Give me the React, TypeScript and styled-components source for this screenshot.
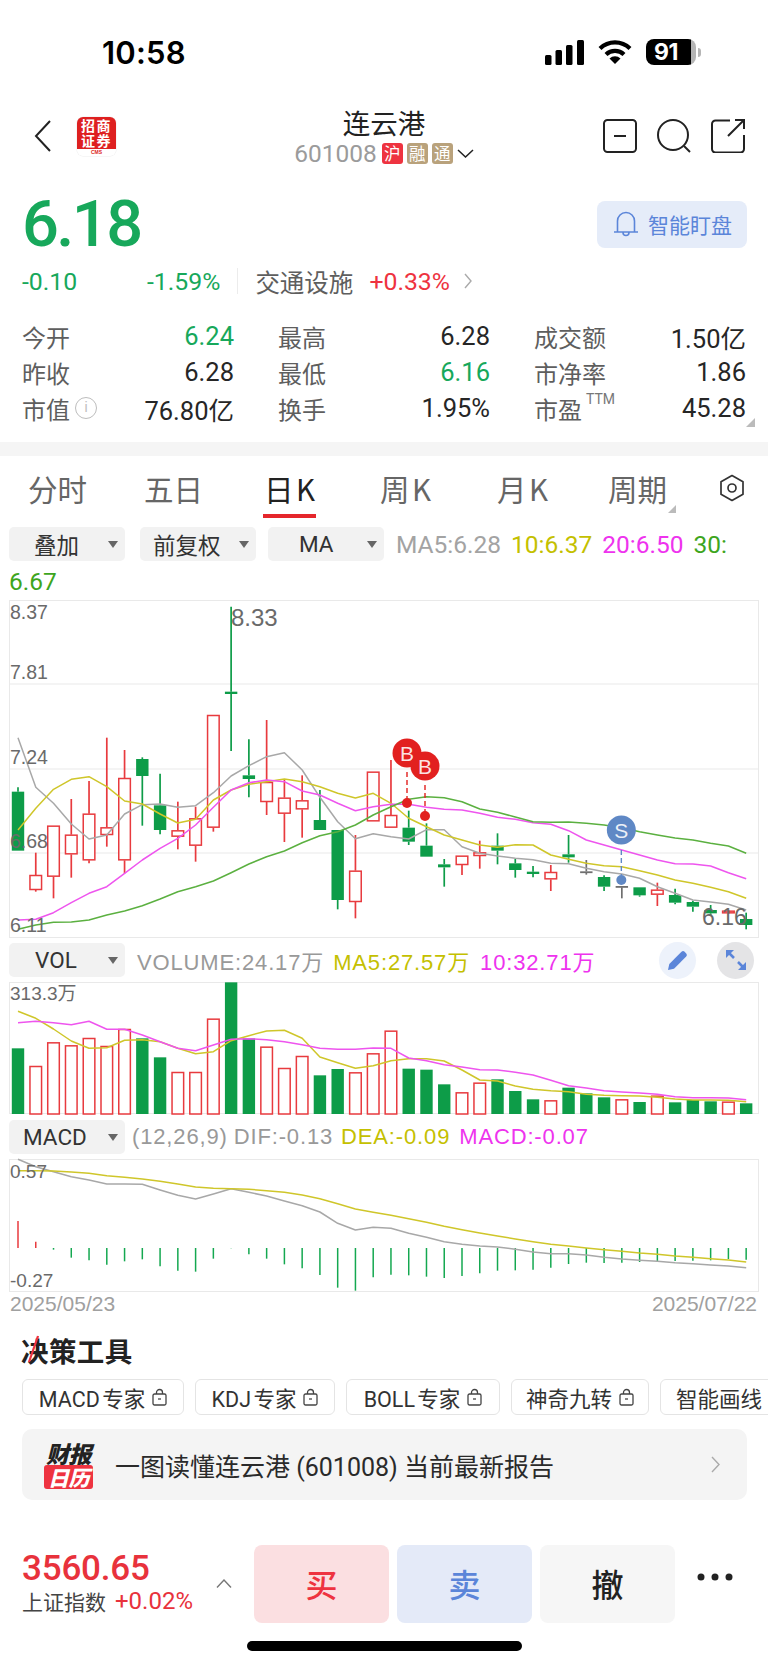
import React from 'react';
import styled, { createGlobalStyle } from 'styled-components';

const Global = createGlobalStyle`
  html, body { margin: 0; padding: 0; background: #fff; }
  #root { width: 768px; height: 1665px; overflow: hidden; }
  * { box-sizing: border-box; }
`;
const CN = `"Noto Sans CJK SC", sans-serif`;
const NUM = `Roboto, "Noto Sans CJK SC", sans-serif`;
const UI = `"Liberation Sans", "Noto Sans CJK SC", sans-serif`;
const GREEN = '#17a85b';
const RED = '#ee3340';
const BLUE = '#5b85d9';

const Page = styled.div`
  width: 768px; height: 1665px; overflow: hidden; background: #fff; font-family: ${NUM}; color: #222;
`;
const StatusBar = styled.div`
  height: 104px; display: flex; align-items: center; justify-content: space-between; padding: 0 67px 0 102px;
`;
const Time = styled.div`font: 600 31px Inter, sans-serif; color: #000; letter-spacing: 0.2px;`;
const StatusIcons = styled.div`display: flex; align-items: center; gap: 14px;`;
const Battery = styled.div`display: flex; align-items: center;`;
const BatteryBody = styled.div`
  width: 50px; height: 26px; border-radius: 8px; background: linear-gradient(90deg, #000 90%, #b5b5b5 90%);
  color: #fff; font: 700 23px Inter, sans-serif; display: flex; align-items: center; padding-left: 8px; letter-spacing: -0.5px;
`;
const BatteryCap = styled.div`width: 3px; height: 9px; margin-left: 2px; border-radius: 0 3px 3px 0; background: #b5b5b5;`;

const NavBar = styled.div`
  height: 64px; display: grid; grid-template-columns: 1fr auto 1fr; align-items: center; padding: 0 23px;
`;
const NavLeft = styled.div`display: flex; align-items: center; gap: 26px; padding-left: 11px;`;
const Logo = styled.div`
  width: 39px; height: 39px; border-radius: 6px; overflow: hidden; background: #fff; display: flex; flex-direction: column; box-shadow: 0 0 0 0.5px #eee;
`;
const LogoRed = styled.div`
  height: 32px; background: #de2020; color: #fff; font: 700 14px/14.5px ${CN}; text-align: center; padding-top: 1.500px; letter-spacing: 1.4px; white-space: pre;
`;
const LogoFoot = styled.div`flex: 1; font: 700 5px/7px ${UI}; color: #d22; text-align: center;`;
const NavCenter = styled.div`display: flex; flex-direction: column; align-items: center;`;
const Title = styled.div`font: 400 27.5px/28px ${CN}; color: #222; margin-bottom: 7px;`;
const CodeRow = styled.div`display: flex; align-items: center; height: 22px;`;
const Code = styled.span`font: 400 24.5px/22px ${NUM}; color: #9b9b9b; margin-right: 5px;`;
const Tag = styled.span<{ $bg: string }>`
  width: 21px; height: 21px; border-radius: 3px; background: ${p => p.$bg}; color: #fff; font: 400 16.5px/21px ${CN}; text-align: center; margin-right: 4px;
`;
const NavRight = styled.div`display: flex; justify-content: flex-end; gap: 20px;`;

const PriceRow = styled.div`
  margin-top: 32px; height: 48px; display: flex; justify-content: space-between; align-items: center; padding: 0 21px 0 22px;
`;
const Price = styled.div`font: 500 65px/47px ${NUM}; color: ${GREEN}; letter-spacing: -2.6px;`;
const WatchBtn = styled.div`
  width: 150px; height: 47px; border-radius: 8px; background: #e5ecf9; color: ${BLUE}; display: flex; align-items: center; gap: 9px; padding-left: 16px; font: 400 21px ${CN};
`;
const ChangeRow = styled.div`height: 66px; display: flex; align-items: center; font-size: 24.8px; padding-left: 22px;`;
const Chg = styled.span<{ $w?: number; $c: string }>`color: ${p => p.$c}; width: ${p => (p.$w ? p.$w + 'px' : 'auto')};`;
const Sep = styled.span`width: 1px; height: 26px; background: #ececec; margin: 0 17px;`;
const Sector = styled.span`font: 400 24.5px ${CN}; color: #5e5e5e; margin-right: 16px;`;
const ChangeArrow = styled.svg`margin-left: 14px;`;

const Stats = styled.div`
  margin-top: 4px; position: relative; display: grid; grid-template-columns: repeat(3, 212px); column-gap: 44px; grid-auto-rows: 36px; padding-left: 22px;
`;
const Cell = styled.div`display: flex; justify-content: space-between; align-items: center;`;
const Label = styled.span`font: 400 24px ${CN}; color: #5e5e5e; display: flex; align-items: center;`;
const Value = styled.span<{ $c?: string }>`font: 400 25.5px ${NUM}; color: ${p => p.$c || '#262626'};`;
const InfoDot = styled.span`
  width: 22px; height: 22px; border-radius: 50%; border: 1.5px solid #bdbdbd; color: #bdbdbd; font: 400 14px/19px ${UI}; text-align: center; margin-left: 5px;
`;
const Sup = styled.span`font: 400 14px ${NUM}; color: #777; margin: -18px 0 0 4px;`;
const Corner = styled.div`
  position: absolute; right: 13px; bottom: -1px; width: 0; height: 0; border-left: 9px solid transparent; border-bottom: 9px solid #bbb;
`;
const Band = styled.div`margin-top: 16px; height: 14px; background: #f5f5f5;`;

const Tabs = styled.div`
  height: 64px; display: grid; grid-template-columns: 116px 120px 116px 117px 111px 111px auto; align-items: center; padding-left: 28px;
`;
const Tab = styled.div<{ $on?: boolean; $mark?: boolean }>`
  position: relative; height: 64px; display: flex; align-items: center; font: 400 29.5px ${CN}; color: ${p => (p.$on ? '#222' : '#666')}; word-spacing: -4px;
  ${p => p.$on && `&::after { content: ''; position: absolute; left: -1px; width: 53px; bottom: 2px; height: 4px; background: #e5262b; }`}
  ${p => p.$mark && `&::after { content: ''; position: absolute; left: 60px; bottom: 7px; width: 0; height: 0; border-left: 8px solid transparent; border-bottom: 8px solid #bbb; }`}
`;

const IndicatorRow = styled.div`
  margin-top: 7px; height: 34px; display: flex; align-items: center; padding-left: 9px;
`;
const Chip = styled.div<{ $pad: number; $mr?: number }>`
  flex: none; width: 116px; height: 34px; border-radius: 5px; background: #f2f2f2; display: flex; align-items: center; padding-left: ${p => p.$pad}px; padding-right: 7px;
  margin-right: ${p => p.$mr ?? 12}px; font: 400 22.5px ${NUM}; color: #333;
  &::after { content: ''; margin-left: auto; width: 0; height: 0; border-left: 5px solid transparent; border-right: 5px solid transparent; border-top: 7px solid #666; }
`;
const Legend = styled.span<{ $c: string; $mr?: number }>`
  font: 400 24.5px ${NUM}; color: ${p => p.$c}; margin-right: ${p => p.$mr ?? 0}px; white-space: nowrap;
`;
const WrapLine = styled.div`height: 39px; display: flex; align-items: center; padding: 1px 0 0 9px;`;
const ChartBox = styled.div<{ $h: number; $mt?: number }>`
  margin: ${p => p.$mt ?? 0}px 0 0 9px; width: 750px; height: ${p => p.$h}px; border: 1px solid #e9e9e9; background: #fff;
`;
const Plot = styled.svg`display: block; margin: -1px; overflow: visible;`;
const SubRow = styled.div<{ $mt: number }>`
  margin-top: ${p => p.$mt}px; height: 34px; display: flex; align-items: center; padding: 0 14px 0 9px;
`;
const SubLegend = styled.span<{ $c: string; $ml?: number }>`
  font: 400 22px ${UI}; letter-spacing: 0.85px; color: ${p => p.$c}; margin-left: ${p => p.$ml ?? 0}px; white-space: nowrap;
`;
const RoundBtn = styled.div<{ $bg: string; $ml: string }>`
  flex: none; width: 37px; height: 37px; border-radius: 50%; background: ${p => p.$bg}; display: flex; align-items: center; justify-content: center; margin-left: ${p => p.$ml};
`;
const DateRow = styled.div`
  height: 24px; padding: 0 11px 0 10px; display: flex; justify-content: space-between; align-items: center; font: 400 21px ${UI}; color: #a0a0a0;
`;
const SectionTitle = styled.div`
  position: relative; margin: 19px 0 0 21px; width: 114px; height: 30px; font: 700 27.5px/30px ${CN}; color: #222; letter-spacing: 0.4px;
`;
const Slash = styled.svg`position: absolute; left: 6px; top: 0;`;
const ToolRow = styled.div`margin-top: 14px; display: flex; gap: 11px; padding-left: 22px; overflow: hidden;`;
const ToolChip = styled.div<{ $w: number }>`
  flex: none; width: ${p => p.$w}px; height: 36px; border: 1.5px solid #e4e4e4; border-radius: 6px; display: flex; align-items: center; justify-content: center; gap: 7px;
  font: 400 21.5px ${NUM}; word-spacing: -3px; color: #333; white-space: nowrap;
`;
const Report = styled.div`
  margin: 14px 0 0 22px; width: 725px; height: 71px; border-radius: 10px; background: #f4f4f4; display: flex; align-items: center; padding: 0 27px 0 22px;
`;
const ReportLogo = styled.div`width: 49px; display: flex; flex-direction: column; align-items: center; margin-right: 22px;`;
const ReportTop = styled.div`font: italic 900 23px/24px ${CN}; color: #222; letter-spacing: -0.5px;`;
const ReportBottom = styled.div`
  width: 49px; height: 24px; border-radius: 3px; background: #ee3340; color: #fff; font: italic 900 21px/24px ${CN}; text-align: center; letter-spacing: -0.5px;
`;
const ReportText = styled.div`font: 400 25px ${NUM}; color: #2a2a2a; flex: 1; white-space: nowrap;`;
const Footer = styled.div`margin-top: 45px; height: 78px; display: flex; align-items: flex-start; padding-left: 22px;`;
const IndexBox = styled.div`width: 191px; padding-top: 5px;`;
const IndexValue = styled.div`font: 500 35px/38px ${NUM}; color: #e8323c; letter-spacing: -0.2px;`;
const IndexSub = styled.div`display: flex; align-items: center; gap: 9px; font: 400 21px/26px ${CN}; color: #444;`;
const IndexPct = styled.span`font: 400 24px/26px ${NUM}; color: #e8323c;`;
const Caret = styled.svg`margin: 34px 22px 0 3px; flex: none;`;
const TradeBtn = styled.div<{ $bg: string; $c: string }>`
  flex: none; width: 135px; height: 78px; border-radius: 8px; margin-right: 8px; background: ${p => p.$bg}; color: ${p => p.$c}; font: 500 32px/76px ${CN}; text-align: center;
`;
const MoreDots = styled.svg`margin: 28px 0 0 14px; flex: none;`;
const HomeBar = styled.div`margin: 18px 0 0 247px; width: 275px; height: 10px; border-radius: 5px; background: #000;`;

const C_RED = '#e83a3e';
const C_GREEN = '#0d9c48';
const C_GRAY = '#6f6f6f';
const X = (i: number) => 9 + 17.76 * i;
type K = [string, number, number, number, number];
const kdata: K[] = [
  ['g',562,575,752,752],['r',758,825,870,875],['r',677,677,830,895],['r',597,704,763,833],['r',543,641,781,790],['r',413,682,705,740],['r',450,534,781,820],
  ['g',472,477,528,677],['g',521,616,690,703],['r',605,691,710,748],['r',620,655,737,785],['r',345,345,683,695],['g',20,275,282,453],['g',418,526,537,592],
  ['r',360,546,606,645],['r',540,593,641,726],['r',526,601,628,713],['g',570,660,690,690],['g',690,690,900,928],['r',705,812,906,955],['r',515,515,664,664],
  ['r',480,645,683,683],['g',632,683,725,735],['g',670,737,770,770],['g',777,793,802,860],['r',767,767,795,825],['r',722,757,768,806],['g',700,737,752,793],
  ['g',777,790,810,833],['g',798,815,822,832],['r',795,816,838,873],['g',705,763,772,788],['k',780,814,818,824],['g',826,831,860,873],['k',858,858,862,895],
  ['g',862,862,886,890],['r',848,869,884,918],['g',866,885,908,913],['g',902,906,920,935],['g',915,930,940,945],['r',930,932,940,942],['g',938,957,975,988],
];
const ma5 = [413,562,610,672,717,705,642,614,612,622,617,578,528,497,470,458,510,592,665,716,701,710,717,689,689,740,760,768,775,779,790,791,805,815,822,835,860,880,900,906,913,930];
const ma10 = [690,625,568,538,530,560,603,612,642,669,658,600,570,553,545,537,545,560,580,594,580,610,655,680,705,720,735,742,734,735,765,778,790,797,800,812,825,840,850,862,875,895];
const ma20 = [960,958,938,908,880,860,820,780,745,715,675,622,570,548,540,545,573,585,610,632,620,613,613,622,628,630,640,652,658,668,673,692,720,735,750,765,780,791,792,798,818,836];
const ma30 = [988,975,967,966,960,945,933,917,897,875,860,843,818,792,770,753,728,707,695,675,645,620,598,590,593,605,627,637,651,665,667,666,670,675,683,695,705,714,720,730,738,760];
const vols: [string, number][] = [['g',355],['r',408],['r',337],['r',346],['r',324],['r',348],['r',297],['g',325],['g',382],['r',426],['r',426],['r',266],['g',157],['g',325],['r',350],['r',414],['r',378],['g',436],['g',417],['r',427],['r',370],['r',302],['g',416],['g',419],['g',463],['r',487],['r',458],['g',448],['g',483],['g',508],['r',511],['g',473],['g',490],['g',502],['r',508],['g',516],['r',497],['g',517],['g',510],['g',514],['r',515],['g',520]];
const vy = [244,265,297,333,355,353,331,329,335,355,371,365,332,317,303,301,325,381,398,415,407,392,386,386,393,420,450,453,468,478,482,485,493,496,497,498,502,507,510,510,511,515];
const vm = [278,274,278,284,274,298,298,315,335,355,362,345,328,326,329,335,344,355,358,358,354,355,384,392,404,411,419,420,427,435,451,467,474,482,486,489,493,500,503,503,504,509];
const hist = [303,365,389,413,421,434,424,418,439,452,455,416,385,403,416,433,445,465,503,512,472,464,466,470,474,468,460,452,451,449,443,432,428,429,428,426,424,423,422,421,417,419];
const dif = [118,140,155,170,180,192,192,193,210,226,237,222,206,217,228,243,257,276,310,330,322,325,340,352,365,373,378,381,388,396,401,401,405,412,417,421,424,428,431,435,438,443];
const dea = [152,152,153,156,160,167,172,177,184,192,201,205,206,208,212,217,225,236,251,267,277,286,296,307,319,329,339,348,357,365,373,378,384,389,394,399,403,408,412,416,420,426];

const line = (arr: number[], off: number) => arr.map((v, i) => `${X(i).toFixed(1)},${(v / 3 - off).toFixed(1)}`).join(' ');
const MaLine = ({ d, off, c }: { d: number[]; off: number; c: string }) => (
  <polyline points={line(d, off)} fill="none" stroke={c} strokeWidth={1.5} strokeLinejoin="round" />
);
const axisText = { fill: '#6a6a6a', fontFamily: '"Liberation Sans", "Noto Sans CJK SC", sans-serif' };

const Candles = () => (
  <>
    {kdata.map(([t, hi, a, b, lo], i) => {
      const x = X(i);
      const c = t === 'r' ? C_RED : t === 'g' ? C_GREEN : C_GRAY;
      const top = a / 3, bot = b / 3;
      return (
        <g key={i}>
          <line x1={x} x2={x} y1={hi / 3} y2={top} stroke={c} strokeWidth={1.7} />
          <line x1={x} x2={x} y1={bot} y2={lo / 3} stroke={c} strokeWidth={1.7} />
          {t === 'r'
            ? <rect x={x - 5.8} y={top + 0.5} width={11.6} height={Math.max(bot - top - 1, 1)} fill="#fff" stroke={c} strokeWidth={1.5} />
            : <rect x={x - 6.2} y={top} width={12.4} height={Math.max(bot - top, 1.8)} fill={c} />}
        </g>
      );
    })}
  </>
);

const Marker = ({ x, y, r, c, t }: { x: number; y: number; r: number; c: string; t: string }) => (
  <g>
    <circle cx={x} cy={y} r={r} fill={c} />
    <text x={x} y={y + 7.5} textAnchor="middle" fontSize={21} fill="#fff" fillOpacity={0.88} fontFamily="Liberation Sans, sans-serif">{t}</text>
  </g>
);

const zx = (z: number) => 384 + z / 3 - 9;

const MainChart = () => (
  <ChartBox $h={338}>
    <Plot width={750} height={338} viewBox="0 0 750 338">
      {[84, 169, 253].map(y => <line key={y} x1={0} x2={750} y1={y} y2={y} stroke="#e9e9e9" strokeWidth={1} />)}
      <Candles />
      <MaLine d={ma5} off={0} c="#a8a8a8" />
      <MaLine d={ma10} off={0} c="#cfc62a" />
      <MaLine d={ma20} off={0} c="#ee55ee" />
      <MaLine d={ma30} off={0} c="#5bb040" />
      <g style={axisText} fontSize={19.5}>
        <text x={1} y={19}>8.37</text>
        <text x={1} y={79}>7.81</text>
        <text x={1} y={164}>7.24</text>
        <text x={1} y={248}>6.68</text>
        <text x={1} y={332}>6.11</text>
        <text x={222} y={26} fontSize={24}>8.33</text>
        <text x={693} y={325} fontSize={23}>6.16</text>
      </g>
      <line x1={zx(69)} x2={zx(69)} y1={172} y2={200} stroke="#e2201f" strokeWidth={1.4} strokeDasharray="5 3" />
      <line x1={zx(123)} x2={zx(123)} y1={185} y2={212} stroke="#e2201f" strokeWidth={1.4} strokeDasharray="5 3" />
      <line x1={zx(712)} x2={zx(712)} y1={250} y2={275} stroke="#5f88c5" strokeWidth={1.4} strokeDasharray="5 3" />
      <circle cx={zx(69)} cy={203} r={5} fill="#e2201f" />
      <circle cx={zx(123)} cy={216} r={5} fill="#e2201f" />
      <circle cx={zx(712)} cy={280} r={5} fill="#5f88c5" />
      <Marker x={zx(69)} y={153} r={14.5} c="#e2201f" t="B" />
      <Marker x={zx(123)} y={166} r={14.5} c="#e2201f" t="B" />
      <Marker x={zx(712)} y={230} r={14.5} c="#5f88c5" t="S" />
    </Plot>
  </ChartBox>
);

const VolChart = () => {
  const base = 552 / 3 - 52;
  return (
    <ChartBox $h={132} $mt={5}>
      <Plot width={750} height={132} viewBox="0 0 750 132">
        {vols.map(([t, z], i) => {
          const y = z / 3 - 52;
          return t === 'r'
            ? <rect key={i} x={X(i) - 5.8} y={y + 0.5} width={11.6} height={base - y - 0.5} fill="#fff" stroke={C_RED} strokeWidth={1.5} />
            : <rect key={i} x={X(i) - 6.2} y={y} width={12.4} height={base - y} fill={C_GREEN} />;
        })}
        <MaLine d={vy} off={52} c="#cfc62a" />
        <MaLine d={vm} off={52} c="#ee55ee" />
        <text x={1} y={18} fontSize={19} style={axisText}>313.3万</text>
      </Plot>
    </ChartBox>
  );
};

const MacdChart = () => {
  const base = 384 / 3 - 39;
  return (
    <ChartBox $h={133} $mt={5}>
      <Plot width={750} height={133} viewBox="0 0 750 133">
        {hist.map((z, i) => (
          <line key={i} x1={X(i)} x2={X(i)} y1={base} y2={z / 3 - 39} stroke={i < 2 ? C_RED : '#14a850'} strokeWidth={1.5} />
        ))}
        <MaLine d={dif} off={39} c="#a8a8a8" />
        <MaLine d={dea} off={39} c="#cfc62a" />
        <text x={1} y={19} fontSize={19} style={axisText}>0.57</text>
        <text x={1} y={128} fontSize={19} style={axisText}>-0.27</text>
      </Plot>
    </ChartBox>
  );
};

const Lock = () => (
  <svg width="15" height="18" viewBox="0 0 15 18" fill="none" stroke="#444" strokeWidth="1.3">
    <rect x="1" y="6" width="13" height="11" rx="1.5" />
    <path d="M4.5 6V4.5a3 3 0 0 1 6 0V6" />
    <path d="M6 11h3" />
  </svg>
);

export default function App() {
  return (
    <Page>
      <Global />
      <StatusBar>
        <Time>10:58</Time>
        <StatusIcons>
          <svg width="39" height="25" viewBox="0 0 39 25" fill="#000">
            <rect x="0" y="15" width="6.5" height="10" rx="1.5" />
            <rect x="10.5" y="10" width="6.5" height="15" rx="1.5" />
            <rect x="21" y="5" width="6.5" height="20" rx="1.5" />
            <rect x="32" y="0" width="7" height="25" rx="1.5" />
          </svg>
          <svg width="34" height="24" viewBox="0 0 34 24" fill="none" stroke="#000" strokeWidth="4.2">
            <path d="M2 8.5a21.5 21.5 0 0 1 30 0" />
            <path d="M8 14.5a13 13 0 0 1 18 0" />
            <path d="M17 24l-5.5-5.6a7.8 7.8 0 0 1 11 0z" fill="#000" stroke="none" />
          </svg>
          <Battery><BatteryBody>91</BatteryBody><BatteryCap /></Battery>
        </StatusIcons>
      </StatusBar>

      <NavBar>
        <NavLeft>
          <svg width="17" height="32" viewBox="0 0 17 32" fill="none" stroke="#222" strokeWidth="2"><path d="M16 1L2 16l14 15" /></svg>
          <Logo>
            <LogoRed>{'招商\n证券'}</LogoRed>
            <LogoFoot>CMS</LogoFoot>
          </Logo>
        </NavLeft>
        <NavCenter>
          <Title>连云港</Title>
          <CodeRow>
            <Code>601008</Code>
            <Tag $bg="#ee3340">沪</Tag>
            <Tag $bg="#b9a27c">融</Tag>
            <Tag $bg="#b9a27c">通</Tag>
            <svg width="17" height="9" viewBox="0 0 17 9" fill="none" stroke="#222" strokeWidth="1.5"><path d="M1 1l7.5 7L16 1" /></svg>
          </CodeRow>
        </NavCenter>
        <NavRight>
          <svg width="34" height="34" viewBox="0 0 34 34" fill="none" stroke="#222" strokeWidth="2">
            <rect x="1" y="1" width="32" height="32" rx="3.5" /><path d="M11 17h12" />
          </svg>
          <svg width="34" height="34" viewBox="0 0 34 34" fill="none" stroke="#222" strokeWidth="2">
            <circle cx="16" cy="16" r="15" /><path d="M27 27l6 6" />
          </svg>
          <svg width="34" height="34" viewBox="0 0 34 34" fill="none" stroke="#222" strokeWidth="2">
            <path d="M19 1.5H4.5a3.5 3.5 0 0 0-3.5 3.5v25a3.5 3.5 0 0 0 3.5 3.5h25a3.5 3.5 0 0 0 3.5-3.5V16" />
            <path d="M17 17L33 1M24 1h9v9" />
          </svg>
        </NavRight>
      </NavBar>

      <PriceRow>
        <Price>6.18</Price>
        <WatchBtn>
          <svg width="26" height="26" viewBox="0 0 26 26" fill="none" stroke={BLUE} strokeWidth="1.6">
            <path d="M1 21h24M4.5 21V10a8.500 8.500 0 0 1 17 0v11M10 21.500a3 3 0 0 0 6 0" />
          </svg>
          智能盯盘
        </WatchBtn>
      </PriceRow>

      <ChangeRow>
        <Chg $w={125} $c={GREEN}>-0.10</Chg>
        <Chg $c={GREEN}>-1.59%</Chg>
        <Sep />
        <Sector>交通设施</Sector>
        <Chg $c={RED}>+0.33%</Chg>
        <ChangeArrow width="8" height="16" viewBox="0 0 8 16" fill="none" stroke="#aaa" strokeWidth="1.4"><path d="M1 1l6 7-6 7" /></ChangeArrow>
      </ChangeRow>

      <Stats>
        <Cell><Label>今开</Label><Value $c={GREEN}>6.24</Value></Cell>
        <Cell><Label>最高</Label><Value>6.28</Value></Cell>
        <Cell><Label>成交额</Label><Value>1.50亿</Value></Cell>
        <Cell><Label>昨收</Label><Value>6.28</Value></Cell>
        <Cell><Label>最低</Label><Value $c={GREEN}>6.16</Value></Cell>
        <Cell><Label>市净率</Label><Value>1.86</Value></Cell>
        <Cell><Label>市值<InfoDot>i</InfoDot></Label><Value>76.80亿</Value></Cell>
        <Cell><Label>换手</Label><Value>1.95%</Value></Cell>
        <Cell><Label>市盈<Sup>TTM</Sup></Label><Value>45.28</Value></Cell>
        <Corner />
      </Stats>
      <Band />

      <Tabs>
        <Tab>分时</Tab>
        <Tab>五日</Tab>
        <Tab $on>日 K</Tab>
        <Tab>周 K</Tab>
        <Tab>月 K</Tab>
        <Tab $mark>周期</Tab>
        <svg width="26" height="28" viewBox="0 0 26 28" fill="none" stroke="#333" strokeWidth="1.7">
          <path d="M13 1.500l11 6.300v12.400l-11 6.300-11-6.300V7.800z" strokeLinejoin="round" /><circle cx="13" cy="14" r="4" />
        </svg>
      </Tabs>

      <IndicatorRow>
        <Chip $pad={25} $mr={15}>叠加</Chip>
        <Chip $pad={13}>前复权</Chip>
        <Chip $pad={31}>MA</Chip>
        <Legend $c="#a3a3a3" $mr={10}>MA5:6.28</Legend>
        <Legend $c="#c4c000" $mr={10}>10:6.37</Legend>
        <Legend $c="#ee33ee" $mr={10}>20:6.50</Legend>
        <Legend $c="#3da51d">30:</Legend>
      </IndicatorRow>
      <WrapLine><Legend $c="#3da51d">6.67</Legend></WrapLine>

      <MainChart />

      <SubRow $mt={5}>
        <Chip $pad={26} $mr={12}>VOL</Chip>
        <SubLegend $c="#999">VOLUME:24.17万</SubLegend>
        <SubLegend $c="#c4c000" $ml={9}>MA5:27.57万</SubLegend>
        <SubLegend $c="#ee33ee" $ml={10}>10:32.71万</SubLegend>
        <RoundBtn $bg="#edf2fb" $ml="auto">
          <svg width="22" height="22" viewBox="0 0 22 22" fill={BLUE}><path d="M1 21l1.300-6L14.500 2.800a2.200 2.200 0 0 1 3.100 0l1.600 1.600a2.200 2.200 0 0 1 0 3.100L7 19.700z" /></svg>
        </RoundBtn>
        <RoundBtn $bg="#e4e4e6" $ml="21px">
          <svg width="24" height="24" viewBox="0 0 24 24" fill={BLUE}>
            <path d="M2 2h8l-8 8zM22 22h-8l8-8z" />
            <path d="M5 5l5 5M14 14l5 5" stroke={BLUE} strokeWidth="2.600" fill="none" />
          </svg>
        </RoundBtn>
      </SubRow>
      <VolChart />

      <SubRow $mt={6}>
        <Chip $pad={14} $mr={7}>MACD</Chip>
        <SubLegend $c="#999">(12,26,9)</SubLegend>
        <SubLegend $c="#999" $ml={6}>DIF:-0.13</SubLegend>
        <SubLegend $c="#c4c000" $ml={8}>DEA:-0.09</SubLegend>
        <SubLegend $c="#ee33ee" $ml={9}>MACD:-0.07</SubLegend>
      </SubRow>
      <MacdChart />
      <DateRow><span>2025/05/23</span><span>2025/07/22</span></DateRow>

      <SectionTitle>
        决策工具
        <Slash width="12" height="28" viewBox="0 0 12 28" fill="none" stroke="#ee3340" strokeWidth="2.200"><path d="M11 1L2 27" /></Slash>
      </SectionTitle>
      <ToolRow>
        <ToolChip $w={162}>MACD 专家<Lock /></ToolChip>
        <ToolChip $w={140}>KDJ 专家<Lock /></ToolChip>
        <ToolChip $w={154}>BOLL 专家<Lock /></ToolChip>
        <ToolChip $w={138}>神奇九转<Lock /></ToolChip>
        <ToolChip $w={140}>智能画线<Lock /></ToolChip>
      </ToolRow>
      <Report>
        <ReportLogo>
          <ReportTop>财报</ReportTop>
          <ReportBottom>日历</ReportBottom>
        </ReportLogo>
        <ReportText>一图读懂连云港 (601008) 当前最新报告</ReportText>
        <svg width="9" height="17" viewBox="0 0 9 17" fill="none" stroke="#aaa" strokeWidth="1.4"><path d="M1 1l7 7.500-7 7.500" /></svg>
      </Report>

      <Footer>
        <IndexBox>
          <IndexValue>3560.65</IndexValue>
          <IndexSub>上证指数<IndexPct>+0.02%</IndexPct></IndexSub>
        </IndexBox>
        <Caret width="16" height="9" viewBox="0 0 16 9" fill="none" stroke="#777" strokeWidth="1.4"><path d="M1 8.500L8 1l7 7.500" /></Caret>
        <TradeBtn $bg="#fbdfe1" $c="#ee3340">买</TradeBtn>
        <TradeBtn $bg="#e4eaf8" $c="#5b85d9">卖</TradeBtn>
        <TradeBtn $bg="#f6f6f6" $c="#222">撤</TradeBtn>
        <MoreDots width="36" height="8" viewBox="0 0 36 8" fill="#222"><circle cx="4" cy="4" r="3.500" /><circle cx="18" cy="4" r="3.500" /><circle cx="32" cy="4" r="3.500" /></MoreDots>
      </Footer>
      <HomeBar />
    </Page>
  );
}
